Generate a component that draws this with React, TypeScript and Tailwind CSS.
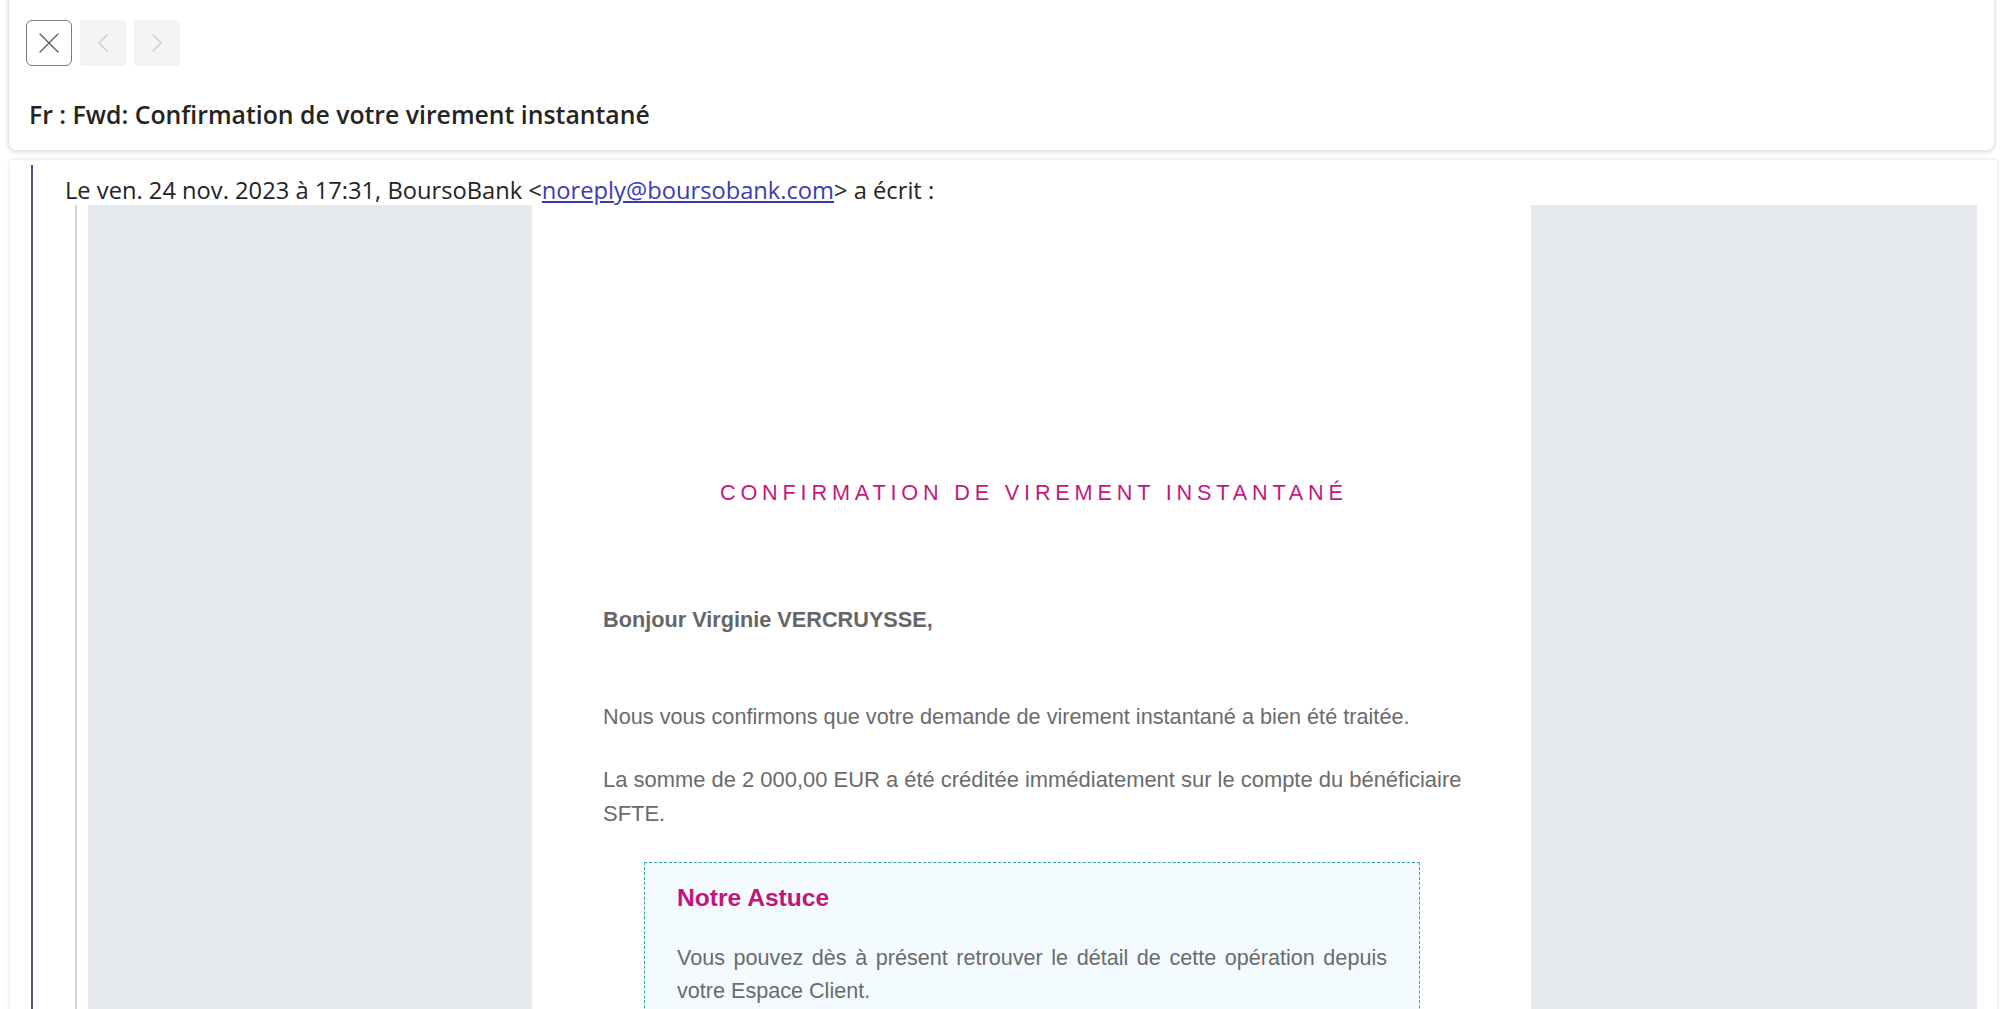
import React from 'react';

const CloseIcon = () => (
  <svg width="22" height="22" viewBox="0 0 22 22" fill="none" stroke="#5c5c5c" strokeWidth="1.3" strokeLinecap="round">
    <path d="M2 2 L20 20" />
    <path d="M20 2 L2 20" />
  </svg>
);

const Chevron = ({ dir }: { dir: 'left' | 'right' }) => (
  <svg width="12" height="20" viewBox="0 0 12 20" fill="none" stroke="#c9c9c9" strokeWidth="1.3" strokeLinecap="round" strokeLinejoin="round">
    {dir === 'left' ? <path d="M10 2 L2 10 L10 18" /> : <path d="M2 2 L10 10 L2 18" />}
  </svg>
);

const App: React.FC = () => {
  return (
    <div className="h-[1009px] overflow-hidden bg-white">
      {/* Header */}
      <div className="ml-2 mr-[5px] -mt-2 rounded-lg bg-white pt-[27px] px-[17px] pb-[21px] shadow-[0_1px_4px_rgba(0,0,0,0.16)] border border-[#e6e6e6]">
        <div className="flex gap-2">
          <button className="w-[46px] h-[46px] rounded-md border border-[#7a7a7a] flex items-center justify-center">
            <CloseIcon />
          </button>
          <button className="w-[46px] h-[46px] rounded bg-[#f4f4f4] flex items-center justify-center">
            <Chevron dir="left" />
          </button>
          <button className="w-[46px] h-[46px] rounded bg-[#f4f4f4] flex items-center justify-center">
            <Chevron dir="right" />
          </button>
        </div>
        <h1 className="mt-[33px] pl-[3px] font-['Open_Sans',sans-serif] font-semibold text-[24.8px] leading-[30px] text-[#242424]">
          Fr : Fwd: Confirmation de votre virement instantané
        </h1>
      </div>

      {/* Message body */}
      <div className="mt-[9px] ml-[10px] mr-[3px] h-[900px] bg-white shadow-[0_0_4px_rgba(0,0,0,0.14)] pl-[21px] pr-[20px] pt-[5px]">
        <div className="border-l-2 border-[#5e4a7e] pl-[32px] h-full">
          <p className="pt-[11px] font-['Open_Sans',sans-serif] text-[23.7px] leading-[29px] text-[#242424]">
            Le ven. 24 nov. 2023 à 17:31, BoursoBank &lt;
            <a href="#" className="underline text-[#3b3bb8]">noreply@boursobank.com</a>
            &gt; a écrit :
          </p>
          <div className="ml-[10px] border-l-2 border-[#d4d4d4] pl-[11px] h-full">
            <div className="flex h-full font-['Liberation_Sans',Arial,sans-serif]">
              <div className="w-[444px] bg-[#e6eaee]" />
              <div className="w-[999px] bg-white pl-[71px] pr-[40px] pt-[270px]">
                <h2 className="-ml-[71px] -mr-[40px] pl-[4.8px] text-center text-[21.7px] leading-[35px] tracking-[4.8px] text-[#c2187e]">
                  CONFIRMATION DE VIREMENT INSTANTANÉ
                </h2>
                <p className="mt-[92px] font-bold text-[21.7px] leading-[35px] text-[#666666]">
                  Bonjour Virginie VERCRUYSSE,
                </p>
                <p className="mt-[62px] text-[21.7px] leading-[35px] text-[#6b6b6b]">
                  Nous vous confirmons que votre demande de virement instantané a bien été traitée.
                </p>
                <p className="mt-[28.5px] text-[21.95px] leading-[34.5px] text-[#6b6b6b]">
                  La somme de 2 000,00 EUR a été créditée immédiatement sur le compte du bénéficiaire
                  <br />
                  SFTE.
                </p>
                <div className="mt-[30.5px] ml-[41px] w-[776px] border border-dashed border-[#3a9fa6] bg-[#f3fbfe] pt-[20px] px-[32px] pb-[30px]">
                  <h3 className="font-bold text-[24.6px] leading-[30px] text-[#c0157a]">Notre Astuce</h3>
                  <p className="mt-[28px] text-[21.6px] leading-[33px] text-[#6b6b6b] text-justify">
                    Vous pouvez dès à présent retrouver le détail de cette opération depuis votre Espace Client.
                  </p>
                </div>
              </div>
              <div className="flex-1 bg-[#e6eaee]" />
            </div>
          </div>
        </div>
      </div>
    </div>
  );
};

export default App;
